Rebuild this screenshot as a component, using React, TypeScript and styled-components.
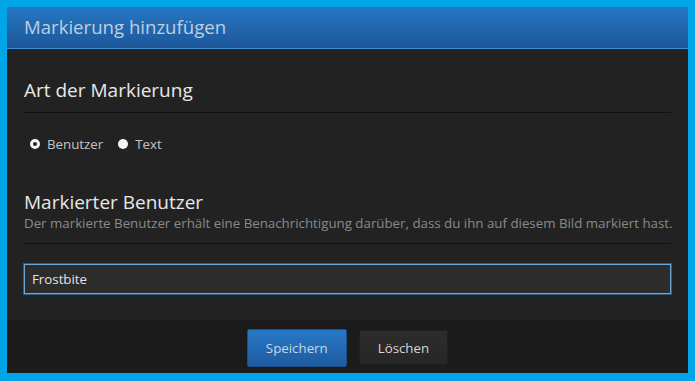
import React, { useState } from "react";
import styled, { createGlobalStyle } from "styled-components";

const GlobalStyle = createGlobalStyle`
  html, body {
    margin: 0;
    padding: 0;
    background: #00a5e8;
  }
  body {
    font-family: "Open Sans", "Noto Sans", sans-serif;
  }
`;

const Page = styled.div`
  width: 695px;
  height: 381px;
  padding: 7px 7px 8px 7px;
  box-sizing: border-box;
  background: #00a5e8;
`;

const Dialog = styled.div`
  display: flex;
  flex-direction: column;
  height: 100%;
  background: #222222;
`;

const Header = styled.div`
  height: 42px;
  display: flex;
  align-items: center;
  padding: 0 17px 2px;
  box-sizing: border-box;
  background: linear-gradient(to bottom, #2577c4, #1d5799);
  border-bottom: 1px solid #3a8fd8;
  color: #bfcfe0;
  font-size: 18.6px;
`;

const Body = styled.div`
  flex: 1;
  padding: 0 17px;
  display: flex;
  flex-direction: column;
`;

const SectionTitle = styled.h2<{ $top: number }>`
  margin: ${({ $top }) => $top}px 0 0 0;
  font-size: 19px;
  font-weight: 400;
  color: #e8e8e8;
  line-height: 24px;
`;

const Hint = styled.div`
  font-size: 13.3px;
  color: #8a8a8a;
  line-height: 18px;
  white-space: nowrap;
`;

const Divider = styled.div<{ $top: number }>`
  margin-top: ${({ $top }) => $top}px;
  height: 1px;
  background: #111111;
`;

const RadioRow = styled.div`
  display: flex;
  gap: 15px;
  margin-top: 22px;
  padding-left: 6px;
`;

const RadioLabel = styled.label`
  display: flex;
  align-items: center;
  gap: 7px;
  font-size: 13.3px;
  color: #c4c4c4;
  cursor: pointer;
`;

const RadioDot = styled.span<{ $checked: boolean }>`
  width: 10px;
  height: 10px;
  border-radius: 50%;
  box-sizing: border-box;
  border: ${({ $checked }) => ($checked ? "3px solid #f4f4f4" : "none")};
  box-shadow: ${({ $checked }) => ($checked ? "inset 0 0 0 2px #222" : "none")};
  background: ${({ $checked }) => ($checked ? "#222" : "#f4f4f4")};
`;

const Input = styled.input`
  margin-top: 20px;
  height: 30px;
  box-sizing: border-box;
  padding: 0 7px;
  background: #2c2c2c;
  border: 1px solid #6aa8dc;
  box-shadow: 0 0 0 1px #2f5c85;
  color: #e4e4e4;
  font-family: "Open Sans", "Noto Sans", sans-serif;
  font-size: 13.3px;
  outline: none;
`;

const Footer = styled.div`
  height: 53px;
  background: #1b1b1b;
  display: flex;
  justify-content: center;
  align-items: center;
  gap: 12px;
  padding-top: 2px;
  box-sizing: border-box;
`;

const Button = styled.button<{ $primary?: boolean }>`
  height: ${({ $primary }) => ($primary ? "38px" : "35px")};
  padding: 0 18px;
  font-family: "Open Sans", "Noto Sans", sans-serif;
  font-size: 13.3px;
  cursor: pointer;
  color: ${({ $primary }) => ($primary ? "#c8d6e6" : "#d4d4d4")};
  border: 1px solid ${({ $primary }) => ($primary ? "#1a4f8a" : "#202020")};
  background: ${({ $primary }) =>
    $primary
      ? "linear-gradient(to bottom, #2879c9, #1d5a9f)"
      : "linear-gradient(to bottom, #2d2d2d, #262626)"};
  border-radius: 2px;
`;

export default function App() {
  const [kind, setKind] = useState("user");
  const [name, setName] = useState("Frostbite");

  return (
    <>
      <GlobalStyle />
      <Page>
        <Dialog>
          <Header>Markierung hinzufügen</Header>
          <Body>
            <SectionTitle $top={29}>Art der Markierung</SectionTitle>
            <Divider $top={10} />
            <RadioRow>
              <RadioLabel onClick={() => setKind("user")}>
                <RadioDot $checked={kind === "user"} />
                Benutzer
              </RadioLabel>
              <RadioLabel onClick={() => setKind("text")}>
                <RadioDot $checked={kind === "text"} />
                Text
              </RadioLabel>
            </RadioRow>
            <SectionTitle $top={37}>Markierter Benutzer</SectionTitle>
            <Hint>
              Der markierte Benutzer erhält eine Benachrichtigung darüber, dass du
              ihn auf diesem Bild markiert hast.
            </Hint>
            <Divider $top={11} />
            <Input value={name} onChange={(e) => setName(e.target.value)} />
          </Body>
          <Footer>
            <Button $primary>Speichern</Button>
            <Button>Löschen</Button>
          </Footer>
        </Dialog>
      </Page>
    </>
  );
}
